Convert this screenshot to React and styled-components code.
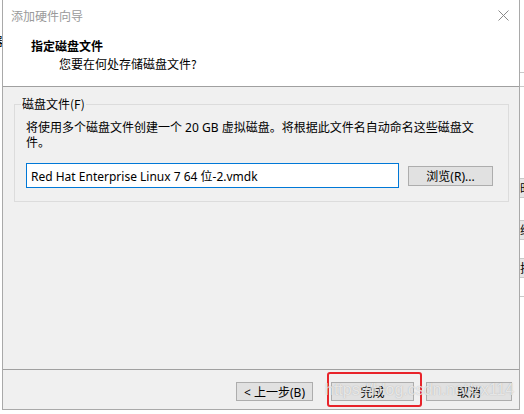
import React from "react";
import styled, { createGlobalStyle } from "styled-components";

const GlobalStyle = createGlobalStyle`
  html, body {
    margin: 0;
    padding: 0;
    background: #ffffff;
  }
  body {
    font-family: "Noto Sans", "Noto Sans CJK SC", sans-serif;
    font-size: 12px;
    color: #000;
  }
`;

function CloseIcon() {
  return (
    <svg width="11" height="11" viewBox="0 0 11 11">
      <path d="M0.5 0.5 L10.5 10.5 M10.5 0.5 L0.5 10.5" stroke="#8a8a8a" strokeWidth="1" fill="none" />
    </svg>
  );
}

function App() {
  return (
    <>
      <GlobalStyle />
      <Page>
        <LeftEdge>
          <EdgeGlyph>器</EdgeGlyph>
        </LeftEdge>
        <Window>
          <TopArea>
            <TitleBar>
              <TitleText>添加硬件向导</TitleText>
              <CloseButton>
                <CloseIcon />
              </CloseButton>
            </TitleBar>
            <Header>
              <HeaderTitle>指定磁盘文件</HeaderTitle>
              <HeaderSub>您要在何处存储磁盘文件?</HeaderSub>
            </Header>
          </TopArea>
          <Body>
            <Group>
              <Legend>磁盘文件(F)</Legend>
              <Description>
                将使用多个磁盘文件创建一个 20 GB 虚拟磁盘。将根据此文件名自动命名这些磁盘文件。
              </Description>
              <FileRow>
                <FileInput defaultValue="Red Hat Enterprise Linux 7 64 位-2.vmdk" />
                <Button $width={85} $height={20}>浏览(R)...</Button>
              </FileRow>
            </Group>
          </Body>
          <Footer>
            <Button $width={77} $height={19}>&lt; 上一步(B)</Button>
            <Marked>
              <Button $width={83} $height={19}>完成</Button>
            </Marked>
            <Button $width={86} $height={19}>取消</Button>
            <Watermark>https://blog.csdn.net/zx114</Watermark>
          </Footer>
        </Window>
        <RightEdge>
          <EdgeLine $top={72} />
          <EdgeLine $top={86} />
          <EdgeCell $top={178}>时</EdgeCell>
          <EdgeCell $top={220}>综</EdgeCell>
          <EdgeCell $top={258}>拉</EdgeCell>
          <EdgeLine $top={296} />
        </RightEdge>
      </Page>
    </>
  );
}

export default App;

const Page = styled.div`
  width: 524px;
  height: 414px;
  display: flex;
  overflow: hidden;
  background: #ffffff;
`;

const LeftEdge = styled.div`
  width: 2px;
  position: relative;
  overflow: hidden;
`;

const EdgeGlyph = styled.span`
  position: absolute;
  left: -9px;
  top: 32px;
  font-size: 12px;
  font-family: "Noto Sans CJK SC", sans-serif;
`;

const RightEdge = styled.div`
  flex: 1;
  position: relative;
  overflow: hidden;
  background: #ffffff;
`;

const EdgeLine = styled.div`
  position: absolute;
  left: 0;
  right: 0;
  top: ${(p) => p.$top}px;
  height: 1px;
  background: #c8c8c8;
`;

const EdgeCell = styled.div`
  position: absolute;
  left: 0;
  top: ${(p) => p.$top}px;
  width: 12px;
  height: 18px;
  line-height: 18px;
  font-size: 12px;
  font-family: "Noto Sans CJK SC", sans-serif;
  background: #e6e6e6;
  border-top: 1px solid #c8c8c8;
  border-bottom: 1px solid #c8c8c8;
`;

const Window = styled.div`
  width: 516px;
  height: 409px;
  border: 1px solid #a9a9a9;
  border-top: none;
  display: flex;
  flex-direction: column;
  background: #f0f0f0;
`;

const TopArea = styled.div`
  height: 86px;
  background: #ffffff;
  border-bottom: 1px solid #a0a0a0;
  display: flex;
  flex-direction: column;
`;

const TitleBar = styled.div`
  height: 30px;
  display: flex;
  align-items: center;
  justify-content: space-between;
  padding: 0 10px 0 8px;
`;

const TitleText = styled.span`
  color: #9a9a9a;
  font-size: 12px;
  font-family: "Noto Sans CJK SC", sans-serif;
`;

const CloseButton = styled.div`
  display: flex;
  align-items: center;
`;

const Header = styled.div`
  padding: 7px 0 0 28px;
  display: flex;
  flex-direction: column;
`;

const HeaderTitle = styled.div`
  font-weight: bold;
  font-size: 12px;
  line-height: 18px;
  font-family: "Noto Sans CJK SC", sans-serif;
`;

const HeaderSub = styled.div`
  padding-left: 28px;
  font-size: 12px;
  line-height: 17px;
  font-family: "Noto Sans CJK SC", sans-serif;
`;

const Body = styled.div`
  flex: 1;
  padding: 10px 10px 0 11px;
  border-bottom: 1px solid #a0a0a0;
`;

const Group = styled.fieldset`
  margin: 0;
  padding: 0 11px 13px 11px;
  border: 1px solid #dcdcdc;
  height: 105px;
  box-sizing: border-box;
  display: flex;
  flex-direction: column;
`;

const Legend = styled.legend`
  padding: 0 1px;
  margin-left: -5px;
  font-size: 12px;
  line-height: 14px;
  font-family: "Noto Sans CJK SC", sans-serif;
`;

const Description = styled.div`
  margin-top: 9px;
  font-size: 12px;
  line-height: 15px;
  width: 460px;
  font-family: "Noto Sans", "Noto Sans CJK SC", sans-serif;
`;

const FileRow = styled.div`
  margin-top: auto;
  display: flex;
  align-items: center;
  gap: 9px;
`;

const FileInput = styled.input`
  width: 373px;
  height: 25px;
  box-sizing: border-box;
  border: 1px solid #0078d7;
  background: #ffffff;
  padding: 0 4px;
  font-size: 12px;
  font-family: "Noto Sans", "Noto Sans CJK SC", sans-serif;
  color: #000;
  outline: none;
`;

const Button = styled.div`
  width: ${(p) => p.$width}px;
  height: ${(p) => p.$height}px;
  box-sizing: border-box;
  background: #e1e1e1;
  border: 1px solid #adadad;
  display: flex;
  align-items: center;
  justify-content: center;
  font-size: 12px;
  font-family: "Noto Sans", "Noto Sans CJK SC", sans-serif;
`;

const Footer = styled.div`
  height: 39px;
  position: relative;
  display: flex;
  align-items: flex-start;
  justify-content: flex-end;
  padding: 12px 7px 0 0;
  box-sizing: border-box;
  gap: 12px;
`;

const Marked = styled.div`
  position: relative;
  margin-left: 6px;

  &::after {
    content: "";
    position: absolute;
    top: -10px;
    left: -4px;
    right: -8px;
    bottom: -6px;
    border: 2px solid #e8232a;
    border-radius: 3px;
    pointer-events: none;
  }
`;

const Watermark = styled.div`
  position: absolute;
  left: 322px;
  top: 11px;
  font-size: 16px;
  font-family: "Liberation Sans", "Noto Sans", sans-serif;
  color: rgba(255, 255, 255, 0.7);
  text-shadow: 0 0 1px rgba(110, 110, 110, 0.5);
  pointer-events: none;
  white-space: nowrap;
`;
